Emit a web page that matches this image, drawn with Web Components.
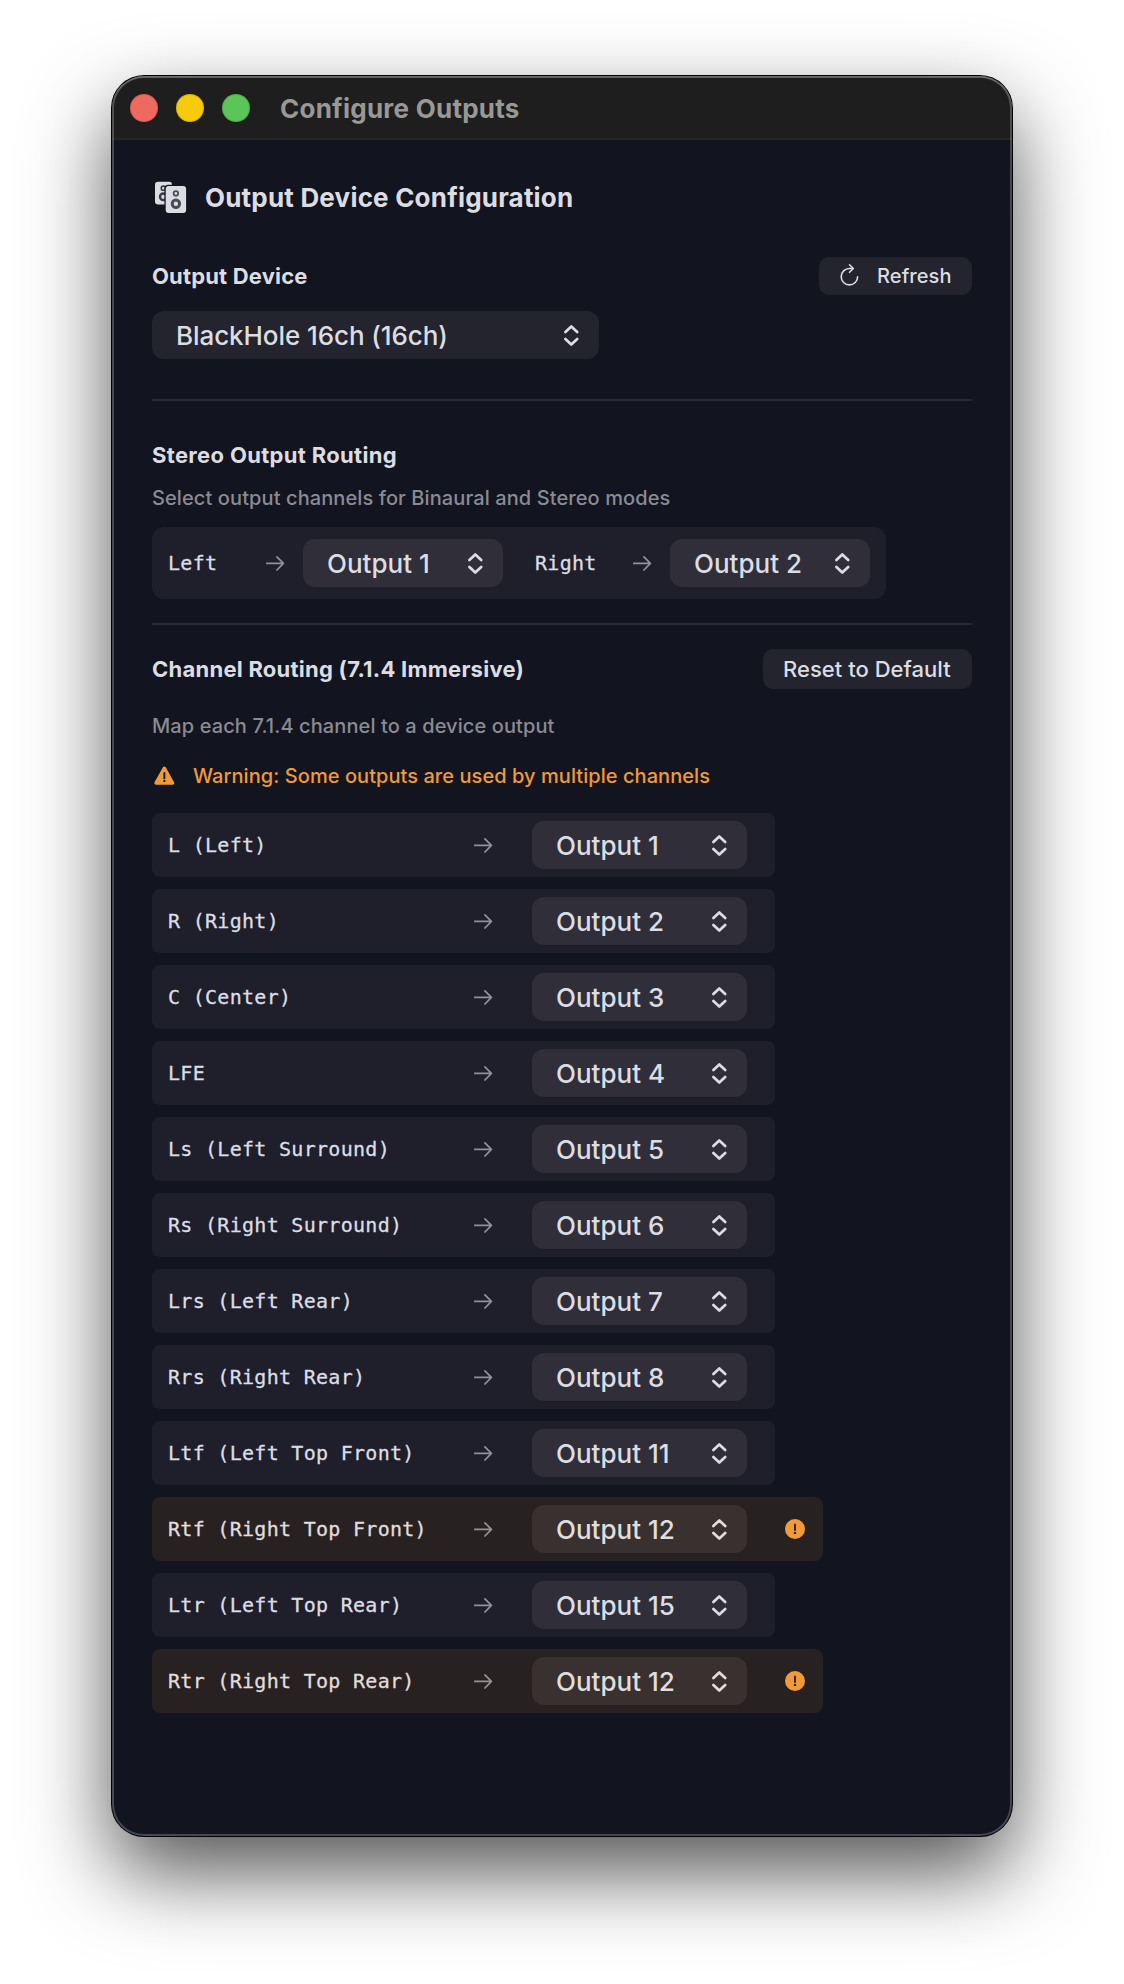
<!DOCTYPE html>
<html lang="en">
<head>
<meta charset="utf-8">
<title>Configure Outputs</title>
<style>
    body {
        margin: 0;
        background: #fff;
        font-family: Inter, "Liberation Sans", sans-serif;
        color: #dcdde2;
    }
</style>
</head>
<body>

<config-window heading="Configure Outputs">
    <window-title>Output Device Configuration</window-title>

    <section-header style="margin-top: 44px">
        Output Device
        <push-button slot="action" icon>Refresh</push-button>
    </section-header>
    <popup-select class="device" style="--select-width: 447px; margin-top: 16px">BlackHole 16ch (16ch)</popup-select>

    <section-divider style="margin: 40px 0"></section-divider>

    <section-header style="letter-spacing: 0.33px">Stereo Output Routing</section-header>
    <help-text style="margin-top: 16px">Select output channels for Binaural and Stereo modes</help-text>
    <stereo-routing style="margin-top: 16px"></stereo-routing>

    <section-divider style="margin: 24px 0"></section-divider>

    <section-header style="letter-spacing: 0.25px">
        Channel Routing (7.1.4 Immersive)
        <push-button slot="action" large>Reset to Default</push-button>
    </section-header>
    <help-text style="margin-top: 24px">Map each 7.1.4 channel to a device output</help-text>
    <warning-text style="margin-top: 24px">Warning: Some outputs are used by multiple channels</warning-text>
    <channel-list style="margin-top: 24px"></channel-list>
</config-window>

<script>
const ARROW = `
    <svg class="arrow" width="23" height="20" viewBox="0 0 23 20" fill="none" stroke="currentColor" stroke-width="1.7" stroke-linecap="round" stroke-linejoin="round">
        <path d="M2.8 10.4H19.3M12.9 3.8L19.4 10.4L12.9 17"/>
    </svg>
`;

class ConfigWindow extends HTMLElement {
    connectedCallback() {
        let shadowRoot = this.attachShadow({ mode: 'open' });
        shadowRoot.innerHTML = `
            <style>
                :host {
                    display: flex;
                    flex-direction: column;
                    box-sizing: border-box;
                    position: relative;
                    width: 900px;
                    height: 1760px;
                    margin: 76px auto 148px;
                    border-radius: 32px;
                    background: #12141f;
                    box-shadow: 0 0 0 1px #000, 0 36px 84px rgba(0, 0, 0, 0.68);
                }
                /* light rim that sits over the bar and the content */
                :host::after {
                    content: '';
                    position: absolute;
                    inset: 0;
                    border-radius: inherit;
                    box-shadow: inset 0 0 0 2px rgba(255, 255, 255, 0.22), inset 0 1.5px 0 rgba(255, 255, 255, 0.18);
                    pointer-events: none;
                }
                header {
                    display: flex;
                    align-items: center;
                    gap: 18px;
                    box-sizing: border-box;
                    height: 64px;
                    padding-left: 18px;
                    border-radius: 32px 32px 0 0;
                    border-bottom: 2px solid #252525;
                    background: #1e1e1e;
                }
                i {
                    width: 26px;
                    height: 26px;
                    margin-top: 1px;
                    border: 1px solid rgba(0, 0, 0, 0.12);
                    border-radius: 50%;
                }
                i:nth-child(1) { background: #ee6a61; }
                i:nth-child(2) { background: #f5cb0c; }
                i:nth-child(3) { background: #5bc657; }
                h1 {
                    margin: 4px 0 0 12px;
                    font-size: 26px;
                    font-weight: 700;
                    line-height: 32px;
                    letter-spacing: 0.25px;
                    color: #989897;
                }
                main {
                    display: flex;
                    flex-direction: column;
                    padding: 41px 40px 0;
                }
            </style>
            <header><i></i><i></i><i></i><h1></h1></header>
            <main><slot></slot></main>
        `;
        shadowRoot.querySelector('h1').textContent = this.getAttribute('heading');
    }
}

customElements.define('config-window', ConfigWindow);


class WindowTitle extends HTMLElement {
    connectedCallback() {
        let shadowRoot = this.attachShadow({ mode: 'open' });
        shadowRoot.innerHTML = `
            <style>
                :host {
                    display: flex;
                    align-items: center;
                    gap: 17px;
                    height: 32px;
                    padding-left: 2px;
                }
                svg { display: block; }
                h2 {
                    margin: 2px 0 0;
                    font-size: 26px;
                    font-weight: 700;
                    line-height: 32px;
                    letter-spacing: 0.2px;
                }
            </style>
            <svg width="34" height="34" viewBox="0 0 34 34">
                <rect x="1" y="1.8" width="17" height="22.8" rx="3" fill="#dcdde2"/>
                <circle cx="9.3" cy="8.2" r="2.1" fill="none" stroke="#3c3d44" stroke-width="1.6"/>
                <circle cx="9.3" cy="16.8" r="3.3" fill="none" stroke="#3c3d44" stroke-width="2.4"/>
                <rect x="10.4" y="4.7" width="23" height="30" rx="4" fill="#12141f"/>
                <rect x="11.7" y="6.1" width="20.4" height="26.9" rx="3" fill="#dcdde2"/>
                <circle cx="21.9" cy="13.4" r="2.3" fill="none" stroke="#4b4c53" stroke-width="1.7"/>
                <circle cx="21.9" cy="23.8" r="3.7" fill="none" stroke="#4b4c53" stroke-width="3"/>
            </svg>
            <h2><slot></slot></h2>
        `;
    }
}

customElements.define('window-title', WindowTitle);


class SectionHeader extends HTMLElement {
    connectedCallback() {
        let shadowRoot = this.attachShadow({ mode: 'open' });
        shadowRoot.innerHTML = `
            <style>
                :host {
                    display: flex;
                    align-items: center;
                    justify-content: space-between;
                    letter-spacing: 0.17px;
                }
                h3 {
                    margin: 0;
                    font-size: 22px;
                    font-weight: 700;
                    line-height: 28px;
                }
            </style>
            <h3><slot></slot></h3>
            <slot name="action"></slot>
        `;
    }
}

customElements.define('section-header', SectionHeader);


class PushButton extends HTMLElement {
    connectedCallback() {
        let shadowRoot = this.attachShadow({ mode: 'open' });
        shadowRoot.innerHTML = `
            <style>
                :host { display: block; }
                button {
                    display: flex;
                    align-items: center;
                    box-sizing: border-box;
                    width: 153px;
                    height: 38px;
                    padding: 0 0 0 20px;
                    border: none;
                    border-radius: 10px;
                    background: #23242e;
                    color: inherit;
                    font: 500 20px/26px Inter, "Liberation Sans", sans-serif;
                    letter-spacing: 0.1px;
                }
                :host([large]) button {
                    width: 209px;
                    height: 40px;
                    font-size: 22px;
                    letter-spacing: 0.03px;
                }
                svg { margin-right: 17px; }
                :host(:not([icon])) svg { display: none; }
            </style>
            <button>
                <svg width="21" height="26" viewBox="0 0 21 26" fill="none" stroke="currentColor" stroke-width="1.6" stroke-linecap="round" stroke-linejoin="round">
                    <path d="M18.6 13.7A8.2 8.2 0 1 1 10.4 5.5H14"/>
                    <path d="M10.5 1.8L14.3 5.5L10.5 9.3"/>
                </svg>
                <slot></slot>
            </button>
        `;
    }
}

customElements.define('push-button', PushButton);


class PopupSelect extends HTMLElement {
    connectedCallback() {
        let shadowRoot = this.attachShadow({ mode: 'open' });
        shadowRoot.innerHTML = `
            <style>
                :host {
                    display: flex;
                    align-items: center;
                    justify-content: space-between;
                    flex: none;
                    box-sizing: border-box;
                    width: var(--select-width, 215px);
                    height: 48px;
                    padding: 0 18px 0 24px;
                    border-radius: 12px;
                    background: var(--select-bg, #302f39);
                    font: 450 26px/32px Inter, "Liberation Sans", sans-serif;
                    letter-spacing: 0;
                    white-space: nowrap;
                }
                :host(.device) {
                    background: #23242e;
                    letter-spacing: -0.08px;
                }
                span { margin-top: 2px; }
                svg { display: block; }
            </style>
            <span><slot></slot></span>
            <svg width="19" height="24" viewBox="0 0 19 24" fill="none" stroke="currentColor" stroke-width="2.7" stroke-linecap="round" stroke-linejoin="round">
                <path d="M3.4 9L9.3 3.4L15.2 9M3.4 15.9L9.3 21.5L15.2 15.9"/>
            </svg>
        `;
    }
}

customElements.define('popup-select', PopupSelect);


class SectionDivider extends HTMLElement {
    connectedCallback() {
        let shadowRoot = this.attachShadow({ mode: 'open' });
        shadowRoot.innerHTML = `
            <style>
                :host {
                    display: block;
                    height: 2px;
                    background: #272832;
                }
            </style>
        `;
    }
}

customElements.define('section-divider', SectionDivider);


class HelpText extends HTMLElement {
    connectedCallback() {
        let shadowRoot = this.attachShadow({ mode: 'open' });
        shadowRoot.innerHTML = `
            <style>
                :host {
                    display: block;
                    font-size: 20px;
                    font-weight: 500;
                    line-height: 26px;
                    letter-spacing: 0.1px;
                    color: #8a8b92;
                }
            </style>
            <slot></slot>
        `;
    }
}

customElements.define('help-text', HelpText);


class WarningText extends HTMLElement {
    connectedCallback() {
        let shadowRoot = this.attachShadow({ mode: 'open' });
        shadowRoot.innerHTML = `
            <style>
                :host {
                    display: flex;
                    align-items: center;
                    gap: 17px;
                    padding-left: 1px;
                    font-size: 20px;
                    font-weight: 500;
                    line-height: 26px;
                    letter-spacing: 0.06px;
                    color: #f09a38;
                }
            </style>
            <svg width="23" height="22" viewBox="0 0 23 22">
                <path d="M11.4 3.2L19.6 18H3Z" fill="currentColor" stroke="currentColor" stroke-width="3.4" stroke-linejoin="round"/>
                <path d="M11.4 8V13.2" stroke="#1b1714" stroke-width="1.9" stroke-linecap="round"/>
                <circle cx="11.4" cy="16" r="1.15" fill="#1b1714"/>
            </svg>
            <slot></slot>
        `;
    }
}

customElements.define('warning-text', WarningText);


class StereoRouting extends HTMLElement {
    connectedCallback() {
        let shadowRoot = this.attachShadow({ mode: 'open' });
        shadowRoot.innerHTML = `
            <style>
                :host {
                    display: flex;
                    align-self: flex-start;
                    gap: 32px;
                    padding: 12px 16px;
                    border-radius: 12px;
                    background: #1e1f2a;
                }
                div {
                    display: flex;
                    align-items: center;
                    gap: 16px;
                }
                label {
                    width: 80px;
                    font: 20px/26px "DejaVu Sans Mono", "Liberation Mono", monospace;
                    letter-spacing: 0.29px;
                    -webkit-text-stroke: 0.3px currentColor;
                }
                .arrow { color: #90919a; }
            </style>
            <div>
                <label>Left</label>
                ${ARROW}
                <popup-select style="--select-width: 200px">Output 1</popup-select>
            </div>
            <div>
                <label>Right</label>
                ${ARROW}
                <popup-select style="--select-width: 200px">Output 2</popup-select>
            </div>
        `;
    }
}

customElements.define('stereo-routing', StereoRouting);


class ChannelRow extends HTMLElement {
    connectedCallback() {
        let shadowRoot = this.attachShadow({ mode: 'open' });
        shadowRoot.innerHTML = `
            <style>
                :host {
                    display: flex;
                    align-items: center;
                    box-sizing: border-box;
                    width: 623px;
                    height: 64px;
                    padding: 0 16px;
                    border-radius: 8px;
                    background: #1e1f2a;
                }
                :host([duplicate]) {
                    --select-bg: #383130;
                    width: 671px;
                    background: #282121;
                    color: #e0dddb;
                }
                label {
                    width: 304px;
                    font: 20px/26px "DejaVu Sans Mono", "Liberation Mono", monospace;
                    letter-spacing: 0.29px;
                    -webkit-text-stroke: 0.3px currentColor;
                    white-space: nowrap;
                }
                .arrow { margin-right: 37px; color: #90919a; }
                :host([duplicate]) .arrow { color: #96918f; }
                .badge { margin-left: 36px; }
                :host(:not([duplicate])) .badge { display: none; }
            </style>
            <label></label>
            ${ARROW}
            <popup-select><slot></slot></popup-select>
            <svg class="badge" width="24" height="24" viewBox="0 0 24 24">
                <circle cx="12" cy="12" r="10" fill="#f19a37"/>
                <path d="M12 7.4V12.9" stroke="#33261c" stroke-width="2" stroke-linecap="round"/>
                <circle cx="12" cy="16.1" r="1.25" fill="#33261c"/>
            </svg>
        `;
        shadowRoot.querySelector('label').textContent = this.getAttribute('name');
    }
}

customElements.define('channel-row', ChannelRow);


const CHANNELS = [
    ['L (Left)', 1],
    ['R (Right)', 2],
    ['C (Center)', 3],
    ['LFE', 4],
    ['Ls (Left Surround)', 5],
    ['Rs (Right Surround)', 6],
    ['Lrs (Left Rear)', 7],
    ['Rrs (Right Rear)', 8],
    ['Ltf (Left Top Front)', 11],
    ['Rtf (Right Top Front)', 12, true],
    ['Ltr (Left Top Rear)', 15],
    ['Rtr (Right Top Rear)', 12, true]
];

class ChannelList extends HTMLElement {
    connectedCallback() {
        let shadowRoot = this.attachShadow({ mode: 'open' });
        shadowRoot.innerHTML = `
            <style>
                :host {
                    display: flex;
                    flex-direction: column;
                    gap: 12px;
                }
            </style>
            ${CHANNELS.map(([name, output, duplicate]) => `
                <channel-row name="${name}" ${duplicate ? 'duplicate' : ''}>Output ${output}</channel-row>
            `).join('')}
        `;
    }
}

customElements.define('channel-list', ChannelList);
</script>
</body>
</html>
